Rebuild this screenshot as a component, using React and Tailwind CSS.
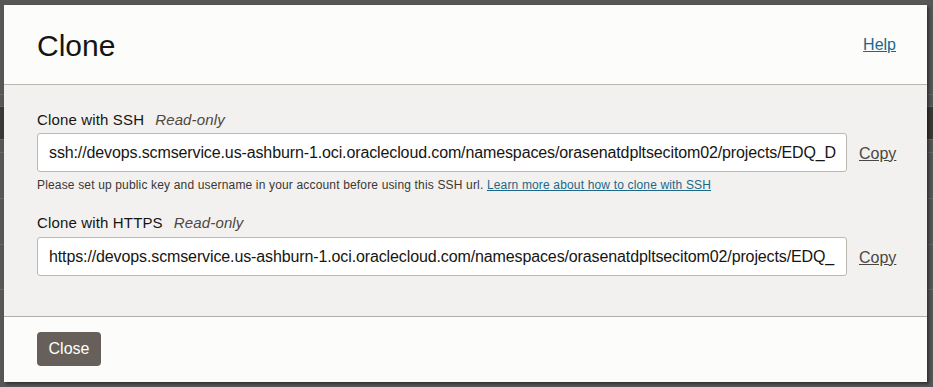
import React from "react";

const SSH = "ssh://devops.scmservice.us-ashburn-1.oci.oraclecloud.com/namespaces/orasenatdpltsecitom02/projects/EDQ_D";
const HTTPS = "https://devops.scmservice.us-ashburn-1.oci.oraclecloud.com/namespaces/orasenatdpltsecitom02/projects/EDQ_";

function UrlRow({ value }) {
  return (
    <div className="flex items-center">
      <div className="w-[810px] h-[39px] shrink-0 bg-white border border-[#bcb7b1] rounded-[3px] flex items-center pl-[11px] pr-[10px] overflow-hidden">
        <div className="min-w-0 flex-1 overflow-hidden whitespace-nowrap text-[16px] text-[#161513] leading-[20px] tracking-[-0.12px]">{value}</div>
      </div>
      <a className="ml-[12px] mt-[3px] text-[16px] text-[#4b4642] underline leading-[20px] cursor-pointer">Copy</a>
    </div>
  );
}

export default function App() {
  return (
    <div className="relative w-[933px] h-[387px] overflow-hidden bg-[#575757]" style={{ fontFamily: '"Liberation Sans", Arial, sans-serif' }}>
      {/* underlying page, dimmed */}
      <div className="flex flex-col w-full">
        <div className="h-[95px] border-b border-[#676767]" />
        <div className="h-[12px] border-b border-[#676767]" />
        <div className="h-[33px] bg-[#3c3835] border-b border-[#676767]" />
        <div className="h-[13px] border-b border-[#676767]" />
        <div className="h-[46px] border-b border-[#676767]" />
        <div className="h-[46px] border-b border-[#676767]" />
        <div className="h-[45px] border-b border-[#676767]" />
      </div>

      {/* modal */}
      <div className="absolute left-[4px] top-[5px] w-[923px] h-[377px] flex flex-col bg-[#fcfcfb] shadow-[2px_2px_3px_rgba(0,0,0,0.45)]">
        <div className="h-[80px] shrink-0 flex items-center justify-between pl-[33px] pr-[31px] border-b border-[#bcb6b0]">
          <h1 className="text-[30px] leading-[36px] text-[#161513] mt-[3px]">Clone</h1>
          <a className="text-[16px] text-[#16698c] underline cursor-pointer">Help</a>
        </div>
        <div className="h-[232px] shrink-0 bg-[#f2f1ef] border-b border-[#b2aeaa] pl-[33px] pt-[26px]">
          <div className="text-[15px] leading-[18px] text-[#161513] tracking-[0.15px]">
            Clone with SSH<span className="italic text-[#4d4843] ml-[11px]">Read-only</span>
          </div>
          <div className="mt-[4px]">
            <UrlRow value={SSH} />
          </div>
          <div className="mt-[6px] text-[12px] leading-[14px] text-[#3b3733] tracking-[0.16px]">
            Please set up public key and username in your account before using this SSH url.{" "}
            <a className="text-[#1c6888] underline cursor-pointer">Learn more about how to clone with SSH</a>
          </div>
          <div className="mt-[22px] text-[15px] leading-[18px] text-[#161513] tracking-[0.15px]">
            Clone with HTTPS<span className="italic text-[#4d4843] ml-[11px]">Read-only</span>
          </div>
          <div className="mt-[5px]">
            <UrlRow value={HTTPS} />
          </div>
        </div>
        <div className="flex-1 flex items-start pl-[33px] pt-[15px]">
          <button className="w-[64px] h-[34px] rounded-[4px] bg-[#665f5a] text-white text-[16px] leading-[20px] flex items-center justify-center">
            Close
          </button>
        </div>
      </div>
    </div>
  );
}
